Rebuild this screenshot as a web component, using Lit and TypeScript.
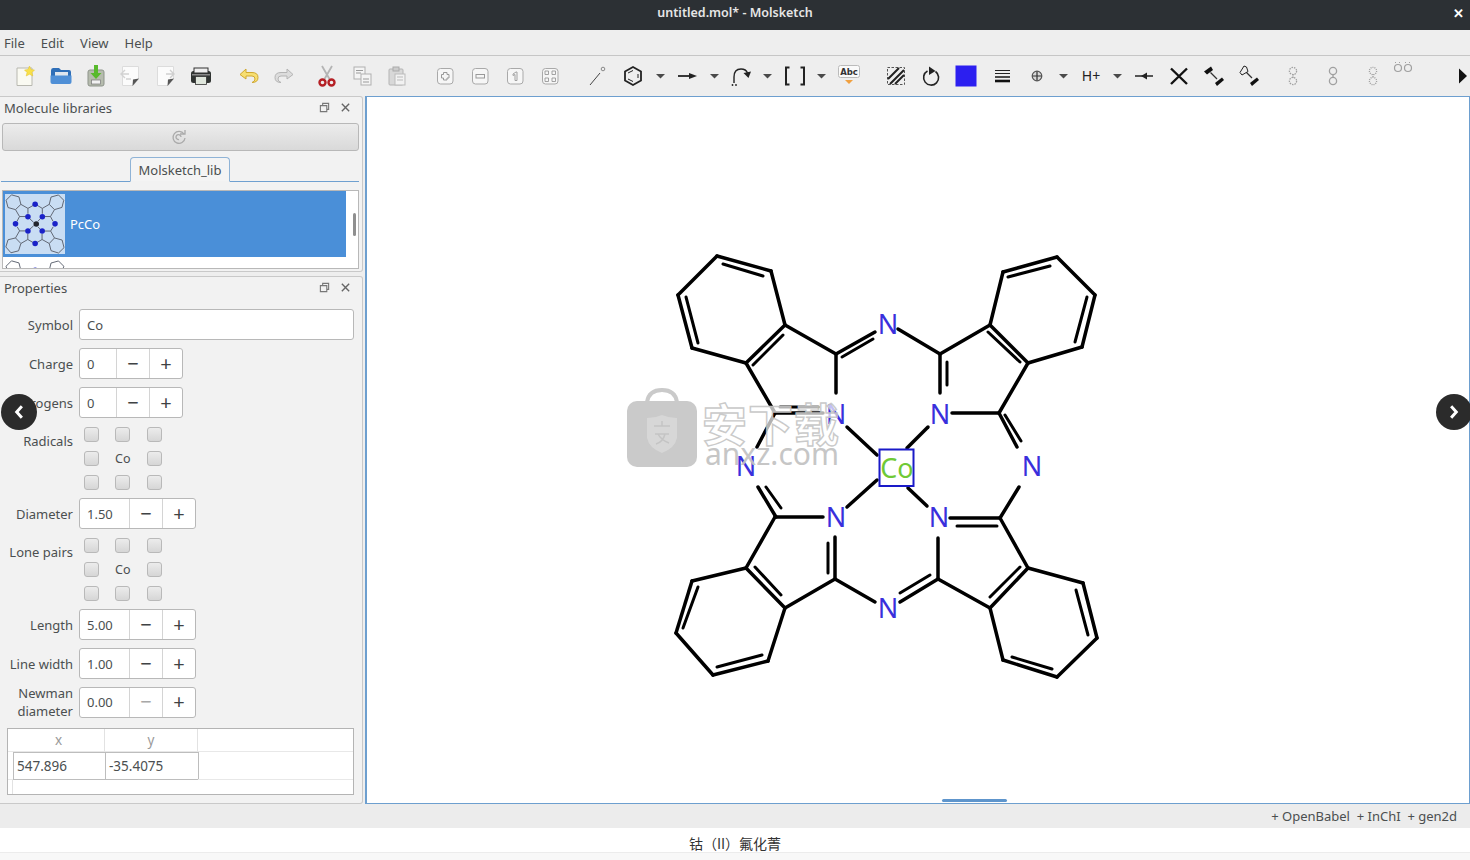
import { LitElement, html, css, svg } from "lit";
import { customElement } from "lit/decorators.js";

type Seg = [number, number, number, number];
const bonds: Seg[] = [
  [717,256,771,271],[771,271,785,325],[785,325,746,363],[746,363,692,348],[692,348,678,295],[678,295,717,256],
  [785,325,836,354],[836,354,875,332],[836,354,836,393],[746,363,775,413],[775,413,823,413],[775,413,757,447],
  [898,329,940,354],[940,354,990,325],[940,354,940,393],[990,325,1028,363],[990,325,1003,272],[1003,272,1057,257],
  [1057,257,1095,295],[1095,295,1082,347],[1082,347,1028,363],[1028,363,999,413],[999,413,952,413],[999,413,1017,447],
  [928,427,907,448],[847,427,877,455],[847,507,877,480],[908,488,927,506],
  [775,517,823,517],[758,487,776,517],[775,517,746,568],[746,568,785,608],[785,608,835,579],[835,579,835,537],
  [835,579,875,602],[746,568,692,581],[692,581,676,633],[676,633,713,675],[713,675,768,661],[768,661,785,608],
  [900,602,938,579],[938,579,938,538],[938,579,990,608],[990,608,1028,568],[1000,518,1028,568],[1000,518,950,518],
  [1000,518,1019,487],[1028,568,1083,583],[1083,583,1097,638],[1097,638,1057,677],[1057,677,1003,660],[1003,660,990,608],
];
const inner: Seg[] = [
  [723,264,763,276],[686,297,698,343],[783,335,753,365],[842,357,873,339],[780,407,818,407],
  [1008,277,1050,266],[1087,297,1075,342],[988,332,1020,362],[947,362,947,385],[1005,415,1021,441],
  [766,487,781,508],[828,543,828,573],[755,567,781,595],[698,587,683,628],[717,667,762,655],
  [900,593,930,575],[990,597,1020,567],[957,526,997,526],[1076,590,1088,635],[1012,657,1052,669],
];
const atoms: [number, number][] = [
  [888,324],[836,414],[940,414],[746,466],[1032,466],[836,517],[939,517],[888,608],
];

const seg = (s: Seg) => svg`<line x1=${s[0]} y1=${s[1]} x2=${s[2]} y2=${s[3]}></line>`;

const drop = svg`<polygon points="8,10 17,10 12.5,14.5" fill="#4a4a4a"></polygon>`;
const twin = (a: string) => svg`<g fill="none" stroke="#a0a0a0" stroke-width="1.3" stroke-dasharray=${a}><circle cx="12" cy="7" r="3.6"></circle><circle cx="12" cy="17" r="3.6"></circle><line x1="12" y1="10" x2="12" y2="14"></line></g>`;
const zoomBox = (inside: unknown) => svg`<rect x="4.5" y="4.5" width="15.500" height="15.500" rx="3" fill="#f6f6f6" stroke="#a9a9a9"></rect>${inside}`;
const page = svg`<path d="M3.500 2.500H19.500V15L14 21.500H3.500Z" fill="#fbfbfb" stroke="#dcdcdc"></path><path d="M20 14.500L13.500 22L14 15.500Z" fill="#555"></path>`;

const tools: { c: number; i: unknown }[] = [
  { c: 25, i: svg`<path d="M4 4H19V21.500H4Z" fill="#fafaf2" stroke="#b8b8b0"></path><polygon points="16.500,2 18,5.500 21.500,6 19,8.500 19.800,12 16.500,10.200 13.200,12 14,8.500 11.500,6 15,5.500" fill="#f8e04a" stroke="#e2c22e" stroke-width=".5"></polygon>` },
  { c: 61, i: svg`<path d="M2 6.500Q2 4 4 4H10L12 6H20Q22 6 22 8V16H2Z" fill="#2f6fb8"></path><rect x="6" y="8" width="13" height="5" fill="#dfe6ee"></rect><path d="M1.500 11.500H22.500V18Q22.500 20 20.500 20H3.500Q1.500 20 1.500 18Z" fill="#4f8fd6"></path>` },
  { c: 96, i: svg`<rect x="4" y="6" width="16" height="16" rx="2" fill="#b6bcae" stroke="#8d938a"></rect><rect x="7.500" y="16" width="9" height="4" fill="#f2f2f2" stroke="#777" stroke-width=".7"></rect><path d="M10 1H14V9H17.500L12 15L6.500 9H10Z" fill="#58b92c"></path>` },
  { c: 131, i: svg`${page}<path d="M2 10H10M6 6L2 10L6 14M7 15H12" stroke="#d2d2d2" stroke-width="1.400" fill="none"></path>` },
  { c: 166, i: svg`${page}<path d="M12 10H20M16 6L20 10L16 14" stroke="#cfcfcf" stroke-width="1.400" fill="none"></path>` },
  { c: 201, i: svg`<rect x="2" y="7" width="20" height="12" rx="2.500" fill="#2f3331"></rect><rect x="5" y="4" width="14" height="5" fill="#eee" stroke="#333"></rect><rect x="6.500" y="12.500" width="11" height="8" fill="#dfe6dc" stroke="#333" stroke-width=".8"></rect><rect x="3" y="10" width="18" height="1.500" fill="#888"></rect>` },
  { c: 249, i: svg`<path d="M9 5L3 10.500L9 15V12H15Q18 12 18 15Q18 17.500 15 18.500Q21 18.500 21 13.500Q21 8.500 15 8.500H9Z" fill="#f7df72" stroke="#d0a830"></path>` },
  { c: 284, i: svg`<path d="M15 5L21 10.500L15 15V12H9Q6 12 6 15Q6 17.500 9 18.500Q3 18.500 3 13.500Q3 8.500 9 8.500H15Z" fill="#dcdcdc" stroke="#b4b4b4"></path>` },
  { c: 327, i: svg`<path d="M7 2L14.500 15M17 2L9.500 15" stroke="#b4b4b4" stroke-width="1.800" fill="none"></path><circle cx="7.500" cy="18.500" r="3" fill="none" stroke="#b52025" stroke-width="2.400"></circle><circle cx="16.500" cy="18.500" r="3" fill="none" stroke="#b52025" stroke-width="2.400"></circle>` },
  { c: 362, i: svg`<rect x="4" y="3" width="11" height="12" fill="#f4f4f4" stroke="#b0b0b0"></rect><rect x="11" y="10" width="10" height="11" fill="#f4f4f4" stroke="#b0b0b0"></rect><path d="M6 6.500H13M6 9H11M13 15H19M13 18H19" stroke="#9a9a9a"></path>` },
  { c: 397, i: svg`<rect x="4" y="5" width="14" height="16" rx="1" fill="#d8d8d8" stroke="#b4b4b4"></rect><rect x="8" y="3" width="6" height="4" fill="#ccc" stroke="#aaa"></rect><rect x="10" y="10" width="10" height="11" fill="#f2f2f2" stroke="#bbb"></rect><path d="M12 13H18M12 16H18" stroke="#bbb"></path>` },
  { c: 445, i: zoomBox(svg`<path d="M10.500 8.500H14V10.500H16V14H14V16H10.500V14H8.500V10.500H10.500Z" fill="none" stroke="#999"></path>`) },
  { c: 480, i: zoomBox(svg`<rect x="8" y="10.500" width="8.500" height="3.500" fill="none" stroke="#999"></rect>`) },
  { c: 515, i: zoomBox(svg`<path d="M10 10L13 8H14V16.500H12V10.500L10 11.500Z" fill="none" stroke="#999" stroke-width=".9"></path>`) },
  { c: 550, i: zoomBox(svg`<path d="M7 10.500V7H10.500V10.500ZM14 7H17.500V10.500H14ZM7 14H10.500V17.500H7ZM14 14H17.500V17.500H14Z" fill="none" stroke="#999" stroke-width=".9"></path>`) },
  { c: 597, i: svg`<line x1="5" y1="21" x2="15" y2="9" stroke="#444" stroke-width="1"></line><circle cx="18" cy="5" r="1.800" fill="none" stroke="#888"></circle>` },
  { c: 633, i: svg`<polygon points="12,3 20,7.500 20,16.500 12,21 4,16.500 4,7.500" fill="none" stroke="#222" stroke-width="1.800"></polygon><path d="M7 9L12 6.500M17 10V14M7 15L12 17.500" stroke="#222"></path>` },
  { c: 660, i: drop },
  { c: 687, i: svg`<path d="M3 12H19" stroke="#222" stroke-width="1.800"></path><polygon points="14,9 22,12 14,15" fill="#222"></polygon>` },
  { c: 714, i: drop },
  { c: 741, i: svg`<path d="M5 19V13Q5 5 12 5Q17 5 18.500 9" fill="none" stroke="#222" stroke-width="1.400"></path><polygon points="14.500,9 22,7.500 19.500,14" fill="#222"></polygon><circle cx="3.500" cy="21" r=".9" fill="#222"></circle><circle cx="7" cy="21" r=".9" fill="#222"></circle>` },
  { c: 767, i: drop },
  { c: 795, i: svg`<path d="M6.500 3.500H3V20.500H6.500M17.500 3.500H21V20.500H17.500" fill="none" stroke="#222" stroke-width="2"></path>` },
  { c: 821, i: drop },
  { c: 849, i: svg`<rect x="1.500" y="1.500" width="21" height="12" rx="2" fill="#fafafa" stroke="#bbb"></rect><text x="12" y="11" class="abc">Abc</text><polygon points="8,16 16,16 12,20" fill="#f0a040"></polygon>` },
  { c: 896, i: svg`<rect x="3.500" y="3.500" width="17" height="17" fill="none" stroke="#555" stroke-dasharray="2.500 1.500"></rect><path d="M4 15L15 4M6 20L20 6M11 20L20 11" stroke="#222" stroke-width="2"></path>` },
  { c: 931, i: svg`<path d="M8.500 7A7.500 7.500 0 1 0 16.500 7.500" fill="none" stroke="#222" stroke-width="1.600"></path><polygon points="10,2.500 16.500,7 10,11" fill="#222"></polygon>` },
  { c: 966, i: svg`<rect x="1.500" y="1.500" width="21" height="21" fill="#2c1ff0"></rect>` },
  { c: 1002, i: svg`<path d="M5 6.500H20M5 9.500H20" stroke="#222" stroke-width="1.200"></path><path d="M5 13H20" stroke="#222" stroke-width="1.600"></path><path d="M5 17H20" stroke="#111" stroke-width="2.600"></path>` },
  { c: 1037, i: svg`<circle cx="12" cy="12" r="4.800" fill="#d8d8d8" stroke="#555" stroke-width="1.200"></circle><path d="M12 7.500V16.500M7.500 12H16.500" stroke="#333" stroke-width="1.200"></path>` },
  { c: 1063, i: drop },
  { c: 1091, i: svg`<text x="12" y="17" class="hplus">H+</text>` },
  { c: 1117, i: drop },
  { c: 1144, i: svg`<path d="M3 12H21" stroke="#222" stroke-width="1.500"></path><polygon points="9,12 15,8.500 15,15.500" fill="#222"></polygon>` },
  { c: 1179, i: svg`<path d="M4 4.500L20 20M20 4.500L4 20" stroke="#111" stroke-width="2.400"></path>` },
  { c: 1214, i: svg`<path d="M8.500 8.500L15 15" stroke="#333" stroke-width="1.200"></path><polygon points="2,7.500 9,2.500 11,6 5,10.500" fill="#111"></polygon><polygon points="13,19 20,13.500 22,16 15,22" fill="#111"></polygon>` },
  { c: 1249, i: svg`<path d="M8.500 7.500L15 14" stroke="#333" stroke-width="1.200"></path><polygon points="7,2 9.500,3 11,7.500 5,11 3,8.500" fill="#eee" stroke="#222"></polygon><polygon points="13,19 20,13.500 22,16 15,22" fill="#111"></polygon>` },
  { c: 1293, i: twin("1.500 1") },
  { c: 1333, i: twin("0") },
  { c: 1373, i: twin("1 1") },
  { c: 1403, i: svg`<g fill="none" stroke="#a0a0a0" stroke-width="1.200" transform="translate(0 -8)"><circle cx="7" cy="12" r="3.500"></circle><circle cx="17" cy="12" r="3.500"></circle><path d="M4 6.500H6M8 6.500H10M14 6.500H16M18 6.500H20" stroke-dasharray="1 1"></path></g>` },
  { c: 1462, i: svg`<polygon points="9,4.500 17,12 9,19.500" fill="#111"></polygon>` },
];

const thumb = () => html`<svg class="thumb" viewBox="670 250 434 434">
  <g class="tb">${bonds.map(seg)}</g>
  ${atoms.map((a) => svg`<circle cx=${a[0]} cy=${a[1]} r="20" fill="#1a22c8"></circle>`)}
  <circle cx="896" cy="467" r="20" fill="#22262c"></circle>
</svg>`;

const floatIcon = html`<svg class="dock-i" viewBox="0 0 12 12"><path d="M4 1.500H10.500V8H8.500V4H4ZM1.500 4H8.500V10.500H1.500Z" fill="none" stroke="#777" stroke-width="1.200"></path></svg>`;
const closeIcon = html`<svg class="dock-i" viewBox="0 0 12 12"><path d="M2 2L10 10M10 2L2 10" stroke="#666" stroke-width="1.500"></path></svg>`;

@customElement("app-root")
export class AppRoot extends LitElement {
  static styles = css`
    :host { display: block; width: 1470px; height: 860px; overflow: hidden; background: #fff;
      font-family: "Noto Sans", sans-serif; font-size: 13px; color: #4b4f50; }
    .app { display: flex; flex-direction: column; height: 860px; }
    .title { height: 30px; flex: none; background: #2c3034; color: #e6e6e6; display: flex; align-items: center;
      justify-content: center; position: relative; font-size: 12.500px; font-weight: 600; padding-bottom: 5px; box-sizing: border-box; }
    .title .x { position: absolute; right: 6px; top: 4px; color: #fff; font-size: 13px; }
    .menu { height: 26px; flex: none; background: #eeeeee; border-bottom: 1px solid #c6c6c6; display: flex; align-items: center;
      gap: 16px; padding-left: 4px; box-sizing: border-box; }
    .toolbar { height: 40px; flex: none; background: #eeeeee; display: flex; align-items: center; overflow: hidden; }
    .tool { width: 24px; height: 24px; flex: none; }
    .tool svg { display: block; width: 24px; height: 24px; overflow: visible; }
    .abc { font: 700 8.500px "DejaVu Sans", sans-serif; fill: #333; text-anchor: middle; }
    .hplus { font: 400 14px "Noto Sans", sans-serif; fill: #222; text-anchor: middle; }
    .main { height: 708px; flex: none; display: flex; background: #eeeeee; }
    .left { width: 363px; flex: none; display: flex; flex-direction: column; gap: 4px; box-sizing: border-box; }
    .dock { background: #f2f2f2; border: 1px solid #c9c9c9; border-left: none; border-radius: 0 3px 3px 0; box-sizing: border-box; }
    .dock-lib { height: 176px; display: flex; flex-direction: column; }
    .dock-prop { flex: 1; display: flex; flex-direction: column; }
    .dock-h { height: 23px; display: flex; align-items: center; justify-content: space-between; padding: 0 11px 2px 4px; flex: none; box-sizing: border-box; }
    .dock-btns { display: flex; gap: 10px; align-items: center; }
    .dock-i { width: 11px; height: 11px; display: block; }
    .refresh { margin: 3px 3px 0 2px; height: 28px; border: 1px solid #b8b8b8; border-radius: 3px; flex: none; box-sizing: border-box;
      background: linear-gradient(#ececec, #d9d9d9); display: flex; align-items: center; justify-content: center; }
    .refresh svg { width: 16px; height: 16px; margin-left: -3px; }
    .tabs { margin: 6px 3px 0 1px; height: 25px; flex: none; display: flex; justify-content: center; border-bottom: 1px solid #6fa0d0; box-sizing: border-box; }
    .tab { height: 25px; width: 100px; box-sizing: border-box; border: 1px solid #8fb3d6; border-bottom: 1px solid #f2f2f2; border-radius: 4px 4px 0 0;
      display: flex; align-items: center; justify-content: center; background: #f4f4f4; }
    .list { margin: 8px 3px 0 2px; height: 79px; flex: none; background: #fff; border: 1px solid #b8b8b8; box-sizing: border-box; overflow: hidden; position: relative; }
    .item { height: 66px; width: 343px; display: flex; align-items: center; gap: 5px; padding-left: 2px; box-sizing: border-box; }
    .item.sel { background: #4a8fd8; color: #fff; }
    .thumb { width: 60px; height: 60px; flex: none; background: #fff; }
    .sel .thumb { background: #c9ddf3; }
    .tb line { stroke: #5d6470; stroke-width: 7; }
    .sb { position: absolute; right: 2px; top: 22px; width: 3px; height: 23px; background: #8f8f8f; border-radius: 2px; }
    .props { padding: 9px 8px 0 0; display: flex; flex-direction: column; gap: 8px; flex: 1; }
    .row { display: flex; gap: 6px; align-items: center; min-height: 31px; }
    .lab { width: 73px; text-align: right; flex: none; line-height: 18px; box-sizing: border-box; }
    .input { flex: 1; height: 31px; background: #fff; border: 1px solid #b8b8b8; border-radius: 3px; box-sizing: border-box; display: flex; align-items: center; padding-left: 7px; }
    .spin { height: 31px; background: #fff; border: 1px solid #b8b8b8; border-radius: 3px; box-sizing: border-box; display: flex; align-items: stretch; }
    .spin .v { width: 29px; padding-left: 7px; display: flex; align-items: center; }
    .spin.wide .v { width: 42px; }
    .spin .b { width: 33px; border-left: 1px solid #d4d4d4; display: flex; align-items: center; justify-content: center; font-size: 20px; color: #3f4345; box-sizing: border-box; line-height: 1; }
    .spin .b.off { color: #a8a8a8; }
    .chk-row { display: flex; gap: 6px; align-items: flex-start; margin-top: -4px; margin-bottom: -4px; }
    .chk-row .lab { padding-top: 10px; }
    .chk-grid { display: grid; grid-template-columns: repeat(3, 31.500px); grid-auto-rows: 24px; justify-items: center; align-items: center; margin-left: -3.500px; }
    .chk { width: 15px; height: 15px; border: 1px solid #b9b9b9; border-radius: 3px; background: linear-gradient(#ececec, #d6d6d6); box-sizing: border-box; }
    .mid { font-size: 12.500px; }
    .newman { margin-top: -3px; }
    .table { margin: 0 0 0 7px; height: 67px; flex: none; background: #fff; border: 1px solid #b4b4b4; box-sizing: border-box; font-size: 13.500px;
      display: grid; grid-template-columns: 5px 92px 93px 1fr; grid-template-rows: 23px 28px 1fr; }
    .table > div { border-right: 1px solid #e2e2e2; border-bottom: 1px solid #e8e8e8; display: flex; align-items: center; box-sizing: border-box; }
    .hd { justify-content: center; color: #9a9a9a; }
    .table > .cell { border: 1px solid #bdbdbd; padding-left: 3px; margin-right: -1px; }
    .table > .nb { border-right: none; }
    .table > .bt { border-bottom: none; }
    .canvas { flex: 1; background: #fff; border: 1px solid #6d9fcf; border-left-width: 2px; margin: 0 0 0 2px; position: relative; overflow: hidden; min-width: 0; }
    .canvas > svg.mol { display: block; width: 1103px; height: 706px; }
    .mol line { stroke: #000; stroke-width: 3.500; stroke-linecap: round; }
    .mol .in line { stroke-width: 3; }
    .n { font: 27px "Noto Sans", sans-serif; fill: #3a2fdc; text-anchor: middle; }
    .co { font: 27px "Noto Sans", sans-serif; fill: #6fc936; text-anchor: middle; }
    .wm { position: absolute; left: 260px; top: 291px; display: flex; gap: 5px; opacity: .93; pointer-events: none; }
    .wm svg { width: 70px; height: 80px; flex: none; }
    .wm-t { display: flex; flex-direction: column; }
    .wm-cn { font: 700 45px/46px "Noto Sans CJK SC", sans-serif; color: rgba(255,255,255,.75); -webkit-text-stroke: 1.400px #c6c6c6; letter-spacing: 1px; margin-top: 12px; }
    .wm-en { font: 30px/30px "Noto Sans", sans-serif; color: #c2c2c2; margin-top: -7px; margin-left: 3px; }
    .handle { position: absolute; left: 575px; bottom: 1px; width: 65px; height: 3px; background: #5e95cc; border-radius: 2px; }
    .status { height: 24px; flex: none; background: #ececec; display: flex; align-items: center; justify-content: flex-end; padding-right: 13px; }
    .caption { height: 24px; flex: none; background: #fff; display: flex; align-items: center; justify-content: center;
      font: 14px "Noto Sans CJK SC", sans-serif; color: #333; padding-top: 5px; box-sizing: border-box; }
    .foot { flex: 1; background: #f8f8f8; border-top: 1px solid #ececec; }
    .nav { position: absolute; top: 394px; width: 36px; height: 36px; border-radius: 50%; background: #2b2b2b; display: flex; align-items: center; justify-content: center; }
    .nav svg { width: 14px; height: 16px; }
    .nav.l { left: 1px; }
    .nav.r { left: 1436px; }
  `;

  private spin(v: string, wide = false, off = false) {
    return html`<div class="spin ${wide ? "wide" : ""}"><div class="v">${v}</div><div class="b ${off ? "off" : ""}">−</div><div class="b">+</div></div>`;
  }

  private checks() {
    const cells = [0, 1, 2, 3, 4, 5, 6, 7, 8];
    return html`<div class="chk-grid">${cells.map((c) => (c === 4 ? html`<div class="mid">Co</div>` : html`<div class="chk"></div>`))}</div>`;
  }

  render() {
    return html`<div class="app">
      <div class="title">untitled.mol* - Molsketch<span class="x">✕</span></div>
      <div class="menu"><span>File</span><span>Edit</span><span>View</span><span>Help</span></div>
      <div class="toolbar">
        ${tools.map((t, i) => html`<div class="tool" style="margin-left:${i === 0 ? t.c - 12 : t.c - tools[i - 1].c - 24}px"><svg viewBox="0 0 24 24">${t.i}</svg></div>`)}
      </div>
      <div class="main">
        <div class="left">
          <div class="dock dock-lib">
            <div class="dock-h"><span>Molecule libraries</span><div class="dock-btns">${floatIcon}${closeIcon}</div></div>
            <div class="refresh"><svg viewBox="0 0 16 16"><path d="M13 5A6 6 0 1 0 14 9M10 8A2.500 2.500 0 1 0 8 10.500" fill="none" stroke="#aaa" stroke-width="1.300"></path><path d="M9 5H14V1" fill="none" stroke="#aaa" stroke-width="1.300"></path></svg></div>
            <div class="tabs"><div class="tab">Molsketch_lib</div></div>
            <div class="list">
              <div class="item sel">${thumb()}<span>PcCo</span></div>
              <div class="item">${thumb()}</div>
              <div class="sb"></div>
            </div>
          </div>
          <div class="dock dock-prop">
            <div class="dock-h"><span>Properties</span><div class="dock-btns">${floatIcon}${closeIcon}</div></div>
            <div class="props">
              <div class="row"><div class="lab">Symbol</div><div class="input">Co</div></div>
              <div class="row"><div class="lab">Charge</div>${this.spin("0")}</div>
              <div class="row"><div class="lab">Hydrogens</div>${this.spin("0")}</div>
              <div class="chk-row"><div class="lab">Radicals</div>${this.checks()}</div>
              <div class="row"><div class="lab">Diameter</div>${this.spin("1.50", true)}</div>
              <div class="chk-row"><div class="lab">Lone pairs</div>${this.checks()}</div>
              <div class="row"><div class="lab">Length</div>${this.spin("5.00", true)}</div>
              <div class="row"><div class="lab">Line width</div>${this.spin("1.00", true)}</div>
              <div class="row newman"><div class="lab">Newman diameter</div>${this.spin("0.00", true, true)}</div>
              <div class="table">
                <div class="nb"></div><div class="hd">x</div><div class="hd">y</div><div class="nb"></div>
                <div class="nb"></div><div class="cell">547.896</div><div class="cell">-35.4075</div><div class="nb"></div>
                <div class="bt"></div><div class="nb bt"></div><div class="nb bt"></div><div class="nb bt"></div>
              </div>
            </div>
          </div>
        </div>
        <div class="canvas">
          <svg class="mol" viewBox="367 97 1103 706">
            <g>${bonds.map(seg)}</g>
            <g class="in">${inner.map(seg)}</g>
            ${atoms.map((a) => svg`<text class="n" x=${a[0]} y=${a[1] + 10}>N</text>`)}
            <rect x="879.500" y="449.500" width="34" height="36.500" fill="#fff" stroke="#1a1ac8" stroke-width="2"></rect>
            <text class="co" x="897" y="478">Co</text>
          </svg>
          <div class="wm">
            <svg viewBox="0 0 70 80">
              <path d="M20 14Q22 2 35 2Q48 2 50 14" fill="none" stroke="#c6c6c6" stroke-width="4"></path>
              <rect x="0" y="13" width="70" height="66" rx="10" fill="#c6c6c6"></rect>
              <path d="M20 30Q28 30 35 27Q42 30 50 30V50Q48 60 35 65Q22 60 20 50Z" fill="#d4d4d4"></path>
              <path d="M27 38H43M35 33V38M28 46H42M38 46Q36 54 29 56M31 46Q34 52 42 55" fill="none" stroke="#c0c0c0" stroke-width="1.500"></path>
            </svg>
            <div class="wm-t"><div class="wm-cn">安下载</div><div class="wm-en">anxz.com</div></div>
          </div>
          <div class="handle"></div>
        </div>
      </div>
      <div class="status">+ OpenBabel&nbsp; + InChI&nbsp; + gen2d</div>
      <div class="caption">钴（II）氟化菁</div>
      <div class="foot"></div>
      <div class="nav l"><svg viewBox="0 0 12 14"><path d="M8.500 2L4 7L8.500 12" fill="none" stroke="#fff" stroke-width="2.600"></path></svg></div>
      <div class="nav r"><svg viewBox="0 0 12 14"><path d="M3.500 2L8 7L3.500 12" fill="none" stroke="#fff" stroke-width="2.600"></path></svg></div>
    </div>`;
  }
}
